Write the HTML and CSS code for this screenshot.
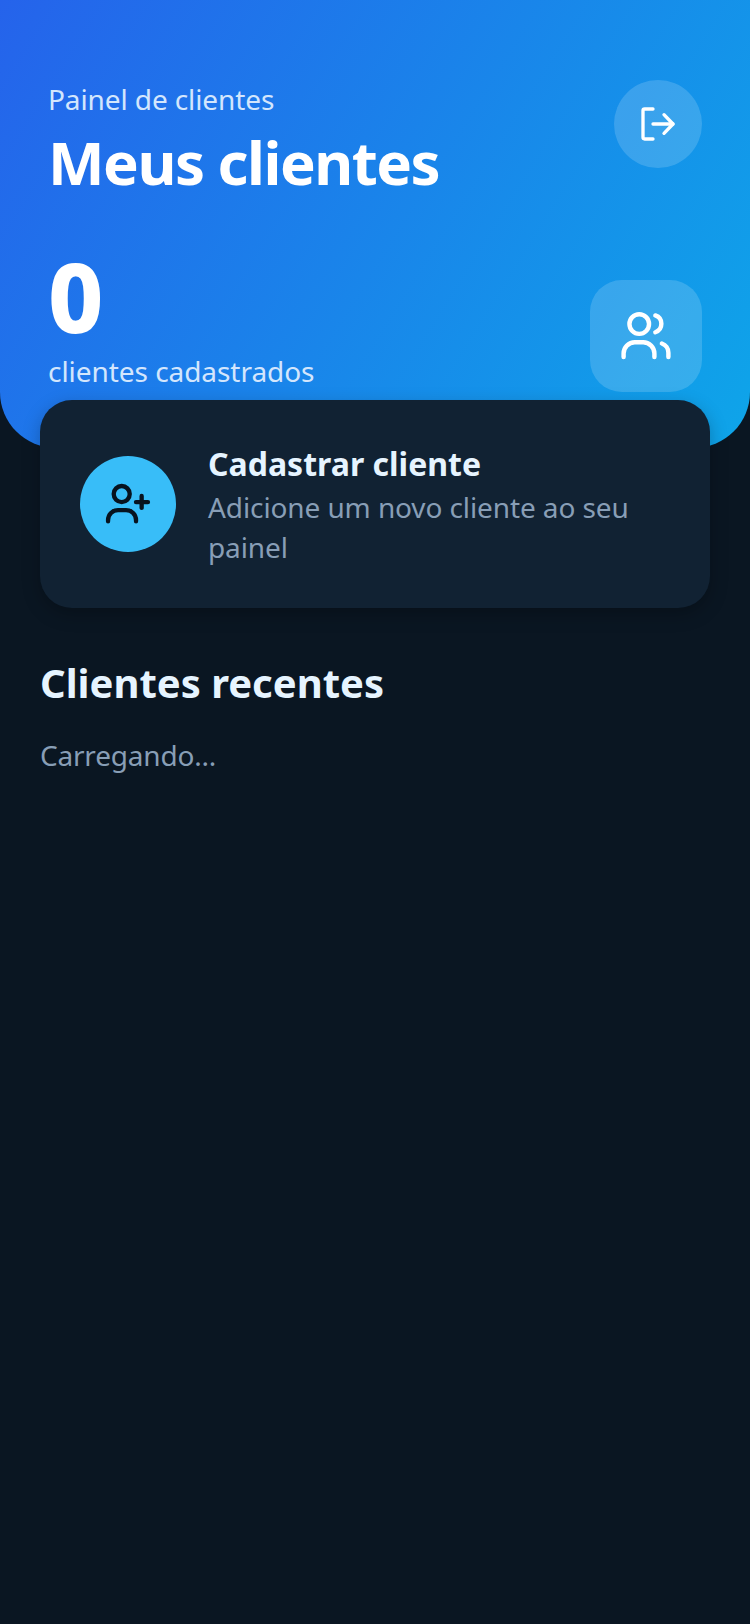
FILE: index.html
```html
<!DOCTYPE html>
<html lang="pt-BR">
<head>
  <meta charset="UTF-8">
  <meta name="viewport" content="width=device-width, initial-scale=1.0">
  <title>Meus clientes</title>
  <link rel="stylesheet" href="styles.css">
</head>
<body>
  <header class="hero">
    <div class="hero-top">
      <div>
        <p class="eyebrow">Painel de clientes</p>
        <h1 class="title">Meus clientes</h1>
      </div>
      <button class="logout" type="button" aria-label="Sair">
        <svg width="40" height="40" viewBox="0 0 24 24" fill="none" stroke="#fff" stroke-width="2" stroke-linecap="round" stroke-linejoin="round">
          <path d="M9 21H4a1 1 0 0 1-1-1V4a1 1 0 0 1 1-1h5"/>
          <path d="M9 12h12"/>
          <path d="M15.6 6.4L21 12l-5.4 5.6"/>
        </svg>
      </button>
    </div>
    <div class="hero-stats">
      <div>
        <div class="count">0</div>
        <div class="count-label">clientes cadastrados</div>
      </div>
      <div class="stats-icon">
        <svg width="56" height="56" viewBox="0 0 24 24" fill="none" stroke="#fff" stroke-width="1.9" stroke-linecap="round" stroke-linejoin="round">
          <circle cx="9.1" cy="6.9" r="4.2"/>
          <path d="M2.4 21v-1.5a4.8 4.8 0 0 1 4.8-4.8h3.6a4.8 4.8 0 0 1 4.8 4.8V21"/>
          <path d="M16 3.2a3.8 3.8 0 0 1 0 7.2"/>
          <path d="M18.8 15.2a4.2 4.2 0 0 1 2.8 4V21"/>
        </svg>
      </div>
    </div>
  </header>

  <main class="content">
    <a class="add-card" href="#">
      <span class="add-icon">
        <svg width="52" height="52" viewBox="0 0 24 24" fill="none" stroke="#07131f" stroke-width="2" stroke-linecap="round" stroke-linejoin="round">
          <circle cx="9.1" cy="7.4" r="3.7"/>
          <path d="M2.8 20v-.6a4.6 4.6 0 0 1 4.6-4.6h3.7a4.6 4.6 0 0 1 4.6 4.6v.6"/>
          <path d="M18.3 8.3v5.5"/>
          <path d="M15.7 11.1h5.5"/>
        </svg>
      </span>
      <span class="add-text">
        <strong class="add-title">Cadastrar cliente</strong>
        <span class="add-desc">Adicione um novo cliente ao seu painel</span>
      </span>
    </a>

    <h2 class="section-title">Clientes recentes</h2>
    <p class="loading">Carregando...</p>
  </main>
</body>
</html>
```

FILE: styles.css
```css
* {
  box-sizing: border-box;
}
body {
  margin: 0;
  min-height: 1624px;
  background-color: #0a1622;
  font-family: "Noto Sans", "Open Sans", sans-serif;
}
.hero {
  height: 448px;
  padding: 80px 48px 0;
  background: linear-gradient(122deg, #2563eb, #0ea5e9);
  border-radius: 0 0 56px 56px;
}
.hero-top {
  display: flex;
  justify-content: space-between;
  align-items: flex-start;
}
.eyebrow {
  margin: 0;
  font-size: 28px;
  line-height: 38px;
  letter-spacing: -0.1px;
  color: #d3e6fd;
}
.title {
  margin: 6px 0 0;
  font-size: 60px;
  line-height: 76px;
  font-weight: 700;
  letter-spacing: -1.5px;
  color: #fff;
}
.logout {
  width: 88px;
  height: 88px;
  padding: 0;
  border: none;
  border-radius: 50%;
  background-color: rgba(255, 255, 255, 0.16);
  display: flex;
  align-items: center;
  justify-content: center;
}
.hero-stats {
  display: flex;
  justify-content: space-between;
  align-items: flex-end;
  margin-top: 40px;
}
.count {
  font-size: 96px;
  line-height: 111px;
  font-weight: 800;
  color: #fff;
}
.count-label {
  margin-bottom: 1px;
  font-size: 28px;
  line-height: 40px;
  letter-spacing: -0.05px;
  color: #d3e6fd;
}
.stats-icon {
  width: 112px;
  height: 112px;
  border-radius: 32px;
  background-color: rgba(255, 255, 255, 0.16);
  display: flex;
  align-items: center;
  justify-content: center;
}
.content {
  padding: 0 40px;
}
.add-card {
  display: flex;
  align-items: flex-start;
  gap: 32px;
  margin-top: -48px;
  padding: 42px 40px 41px;
  border-radius: 32px;
  background-color: #112233;
  box-shadow: 0 6px 18px rgba(0, 0, 0, 0.25);
  text-decoration: none;
  position: relative;
}
.add-icon {
  flex: none;
  width: 96px;
  height: 96px;
  margin-top: 14px;
  border-radius: 50%;
  background-color: #38bdf8;
  display: flex;
  align-items: center;
  justify-content: center;
}
.add-text {
  display: block;
}
.add-title {
  display: block;
  margin-bottom: 1px;
  font-size: 32px;
  line-height: 44px;
  font-weight: 700;
  color: #e6f4ff;
}
.add-desc {
  display: block;
  font-size: 28px;
  line-height: 40px;
  letter-spacing: -0.1px;
  color: #889eb6;
}
.section-title {
  margin: 47px 0 0;
  font-size: 40px;
  line-height: 56px;
  font-weight: 700;
  color: #e6f4ff;
}
.loading {
  margin: 24px 0 0;
  font-size: 28px;
  line-height: 40px;
  letter-spacing: -0.2px;
  color: #889eb6;
}
```
